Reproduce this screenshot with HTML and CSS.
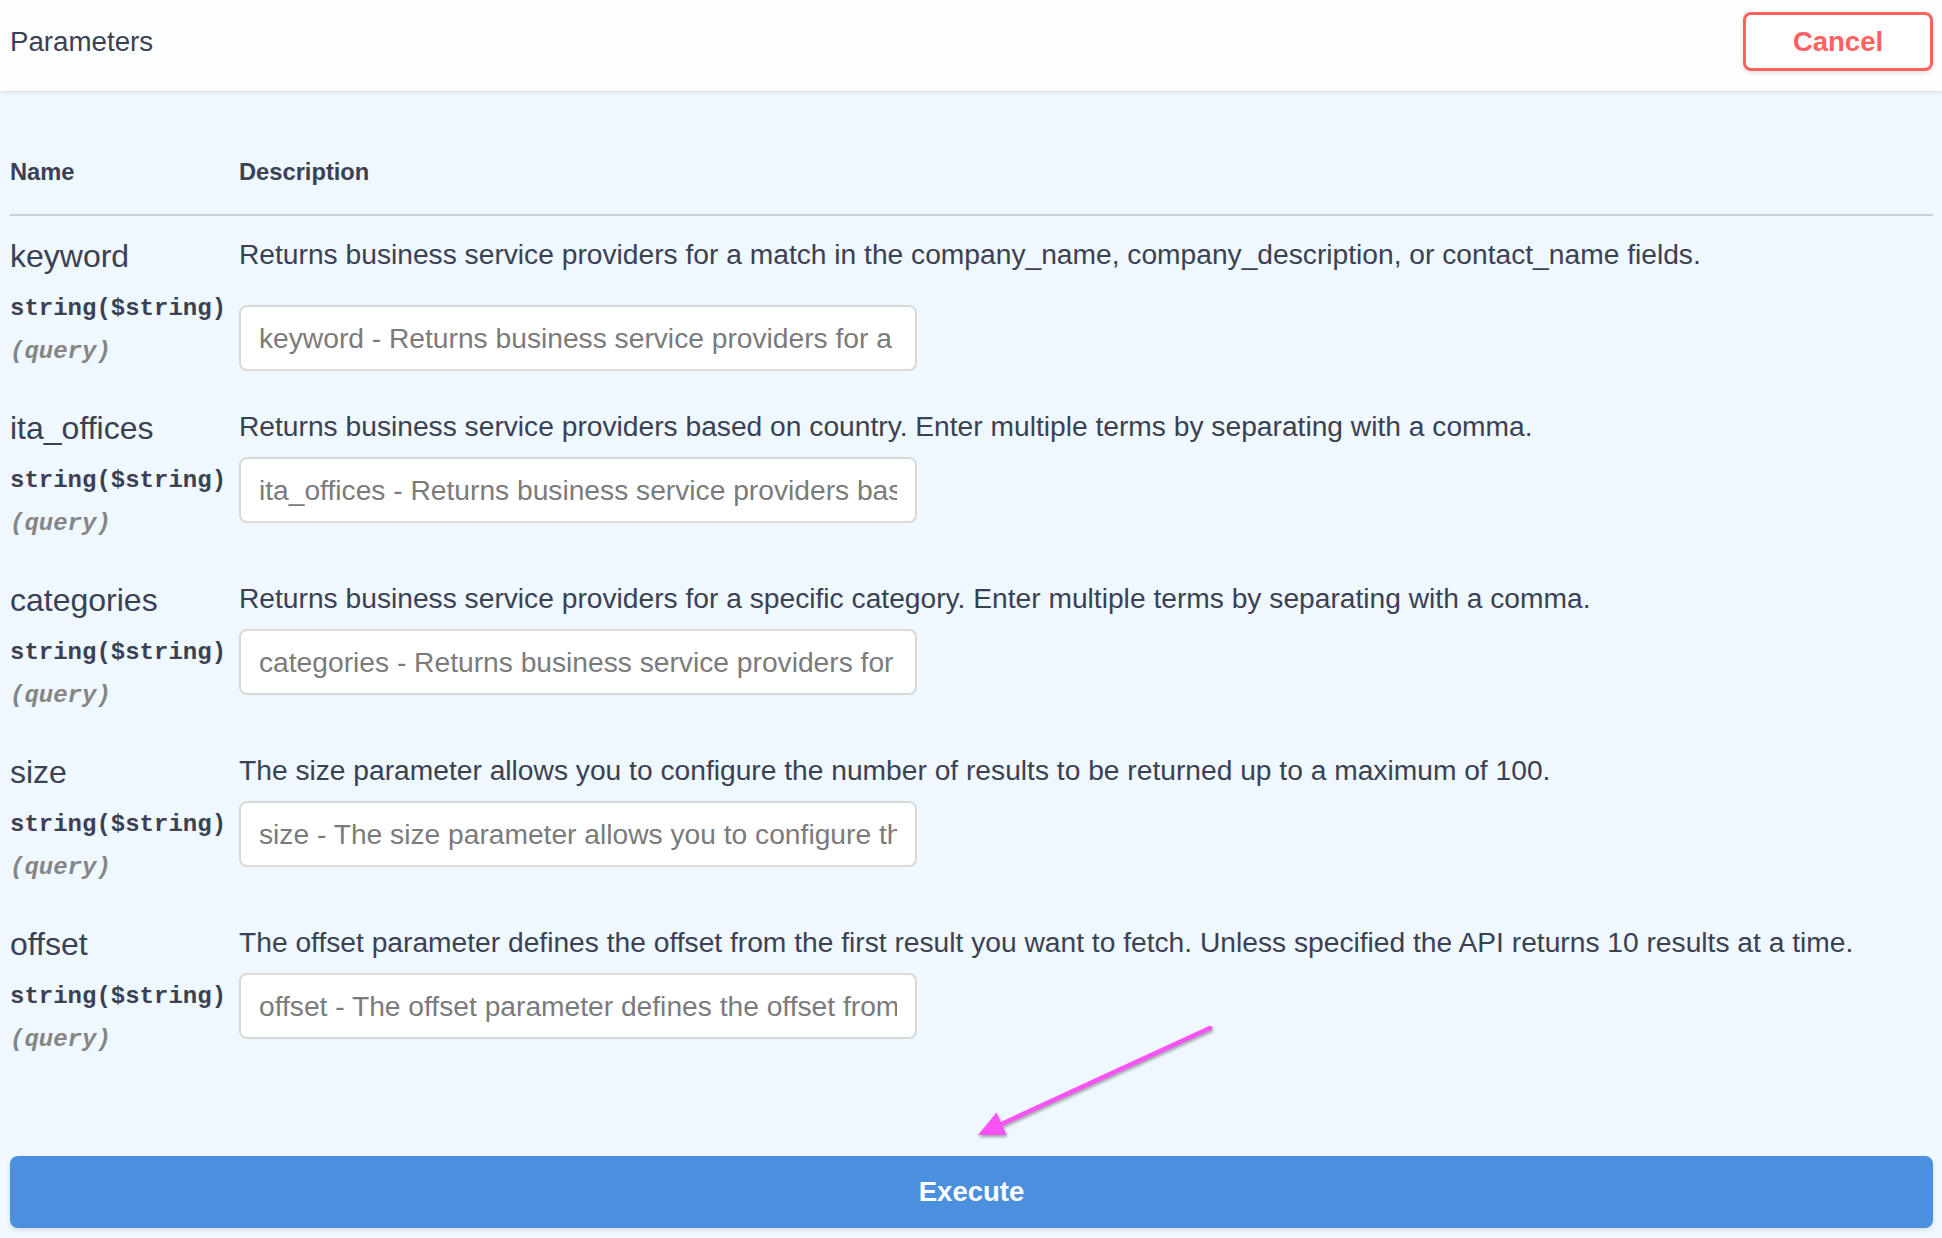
FILE: index.html
```html
<!DOCTYPE html>
<html lang="en">
<head>
<meta charset="utf-8">
<title>Parameters</title>
<link rel="stylesheet" href="styles.css">
</head>
<body>
<div class="page">
  <header class="section-header">
    <h4 class="title">Parameters</h4>
    <button class="btn-cancel" type="button">Cancel</button>
  </header>

  <div class="params">
    <div class="thead">
      <div class="th">Name</div>
      <div class="th">Description</div>
    </div>

    <div class="prow">
      <div class="pcol-name">
        <div class="pname">keyword</div>
        <div class="ptype">string($string)</div>
        <div class="pin">(query)</div>
      </div>
      <div class="pcol-desc">
        <div class="pdesc">Returns business service providers for a match in the company_name, company_description, or contact_name fields.</div>
        <input class="pinput pinput-first" type="text" placeholder="keyword - Returns business service providers for a match in the company_name, company_description, or contact_name fields.">
      </div>
    </div>

    <div class="prow">
      <div class="pcol-name">
        <div class="pname">ita_offices</div>
        <div class="ptype">string($string)</div>
        <div class="pin">(query)</div>
      </div>
      <div class="pcol-desc">
        <div class="pdesc">Returns business service providers based on country. Enter multiple terms by separating with a comma.</div>
        <input class="pinput" type="text" placeholder="ita_offices - Returns business service providers based on country. Enter multiple terms by separating with a comma.">
      </div>
    </div>

    <div class="prow">
      <div class="pcol-name">
        <div class="pname">categories</div>
        <div class="ptype">string($string)</div>
        <div class="pin">(query)</div>
      </div>
      <div class="pcol-desc">
        <div class="pdesc">Returns business service providers for a specific category. Enter multiple terms by separating with a comma.</div>
        <input class="pinput" type="text" placeholder="categories - Returns business service providers for a specific category. Enter multiple terms by separating with a comma.">
      </div>
    </div>

    <div class="prow">
      <div class="pcol-name">
        <div class="pname">size</div>
        <div class="ptype">string($string)</div>
        <div class="pin">(query)</div>
      </div>
      <div class="pcol-desc">
        <div class="pdesc">The size parameter allows you to configure the number of results to be returned up to a maximum of 100.</div>
        <input class="pinput" type="text" placeholder="size - The size parameter allows you to configure the number of results to be returned up to a maximum of 100.">
      </div>
    </div>

    <div class="prow">
      <div class="pcol-name">
        <div class="pname">offset</div>
        <div class="ptype">string($string)</div>
        <div class="pin">(query)</div>
      </div>
      <div class="pcol-desc">
        <div class="pdesc">The offset parameter defines the offset from the first result you want to fetch. Unless specified the API returns 10 results at a time.</div>
        <input class="pinput" type="text" placeholder="offset - The offset parameter defines the offset from the first result you want to fetch. Unless specified the API returns 10 results at a time.">
      </div>
    </div>
  </div>

  <div class="execute-wrap">
    <button class="btn-execute" type="button">Execute</button>
  </div>

  <svg class="annotation" width="260" height="140" viewBox="960 1015 260 140" aria-hidden="true">
    <g class="arrow-shape">
      <line x1="1210" y1="1028" x2="995" y2="1127" stroke="#fa52f7" stroke-width="4.5" stroke-linecap="round"/>
      <polygon points="978,1135 996.5,1112.5 1006.5,1135" fill="#fa52f7"/>
    </g>
  </svg>
</div>
</body>
</html>
```

FILE: styles.css
```css
html, body {
  margin: 0;
  padding: 0;
  background: #eff7ff;
}

body {
  font-family: "Liberation Sans", Arial, Helvetica, sans-serif;
  color: #3b4151;
}

.page {
  position: relative;
  min-height: 1238px;
}

.section-header {
  position: relative;
  display: flex;
  justify-content: space-between;
  align-items: flex-start;
  height: 91px;
  box-sizing: border-box;
  padding: 12px 9px 0 10px;
  background: #fdfeff;
  box-shadow: 0 1px 4px rgba(0, 0, 0, 0.12);
}

.title {
  margin: 0;
  font-size: 27.7px;
  font-weight: 400;
  line-height: 59px;
  color: #3b4151;
}

.btn-cancel {
  width: 190px;
  height: 59px;
  padding: 0;
  box-sizing: border-box;
  border: 3px solid #ff6060;
  border-radius: 8px;
  background: #fff;
  color: #ff6060;
  font-family: "Liberation Sans", Arial, sans-serif;
  font-weight: 700;
  font-size: 27.5px;
  box-shadow: 0 2px 4px rgba(0, 0, 0, 0.12);
}

.params {
  padding: 66px 9px 0 10px;
}

.thead {
  display: grid;
  grid-template-columns: 229px 1fr;
  font-size: 23.7px;
  font-weight: 700;
  line-height: 30px;
  padding-bottom: 27px;
  border-bottom: 2px solid #c9d0da;
}

.prow {
  display: grid;
  grid-template-columns: 229px 1fr;
  align-items: start;
  padding-top: 20px;
}

.pname {
  font-size: 32px;
  line-height: 40px;
}

.ptype {
  margin-top: 18px;
  font-family: "Liberation Mono", "Courier New", monospace;
  font-weight: 700;
  font-size: 24px;
  line-height: 30px;
  color: #3b4151;
}

.pin {
  margin-top: 13px;
  margin-bottom: 21px;
  font-family: "Liberation Mono", "Courier New", monospace;
  font-weight: 700;
  font-style: italic;
  font-size: 24px;
  line-height: 30px;
  color: #858585;
}

.pdesc {
  font-size: 28.2px;
  line-height: 36px;
  white-space: nowrap;
}

.pinput {
  display: block;
  margin: 13px 0 0 0;
  width: 678px;
  height: 66px;
  box-sizing: border-box;
  padding: 0 18px;
  border: 2px solid #d9d9d9;
  border-radius: 8px;
  background: #fff;
  font-family: "Liberation Sans", Arial, sans-serif;
  font-size: 28.2px;
  color: #3b4151;
  outline: none;
}

.pinput::placeholder {
  color: #7b7b7b;
  opacity: 1;
}

.pinput-first {
  margin-top: 33px;
}

.execute-wrap {
  padding: 80px 9px 0 10px;
}

.btn-execute {
  display: block;
  width: 100%;
  height: 72px;
  padding: 0;
  border: none;
  border-radius: 8px;
  background: #4b90df;
  color: #fff;
  font-family: "Liberation Sans", Arial, sans-serif;
  font-weight: 700;
  font-size: 27.5px;
  box-shadow: 0 2px 4px rgba(0, 0, 0, 0.12);
}

.annotation {
  position: absolute;
  left: 960px;
  top: 1015px;
  pointer-events: none;
  overflow: visible;
}

.arrow-shape {
  filter: drop-shadow(1px 2px 1.5px rgba(0, 0, 0, 0.35));
}
```
